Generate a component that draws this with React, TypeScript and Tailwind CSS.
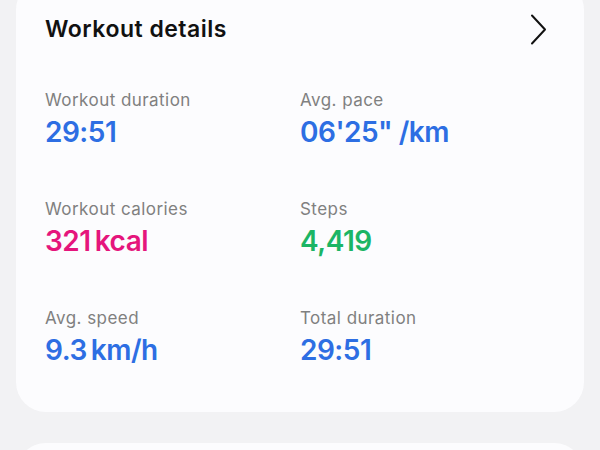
import React from "react";

const items = [
  { label: "Workout duration", value: "29:51", color: "text-[#2d6ee3]" },
  { label: "Avg. pace", value: "06'25\" /km", color: "text-[#2d6ee3]" },
  { label: "Workout calories", value: "321\u2009kcal", color: "text-[#e5157c]" },
  { label: "Steps", value: "4,419", color: "text-[#1bb565]" },
  { label: "Avg. speed", value: "9.3\u2009km/h", color: "text-[#2d6ee3]" },
  { label: "Total duration", value: "29:51", color: "text-[#2d6ee3]" },
];

export default function App() {
  return (
    <div
      className="w-[600px] h-[450px] overflow-hidden bg-[#f2f2f4]"
      style={{ fontFamily: "Inter, 'Noto Sans', sans-serif" }}
    >
      <div className="mx-[16px] mt-[-20px] rounded-[30px] bg-[#fcfcfe] px-[29px] pt-[34px] pb-[45px]">
        <div className="flex items-center justify-between h-[30px]">
          <div className="text-[23px] leading-[30px] font-semibold text-[#111111] tracking-[0.5px]">
            Workout details
          </div>
          <svg width="17" height="31" viewBox="0 0 17 31" className="mr-[8px]">
            <polyline
              points="2,1.5 15,15.5 2,29.5"
              fill="none"
              stroke="#111"
              strokeWidth="2"
              strokeLinecap="round"
              strokeLinejoin="round"
            />
          </svg>
        </div>
        <div className="grid grid-cols-2 gap-y-[48px] mt-[44px]">
          {items.map((it) => (
            <div key={it.label} className="flex flex-col">
              <div className="text-[17px] leading-[24px] text-[#808080] tracking-[0.45px]">{it.label}</div>
              <div className={`mt-[3px] text-[28px] leading-[34px] font-semibold tracking-[-0.5px] ${it.color}`}>
                {it.value}
              </div>
            </div>
          ))}
        </div>
      </div>
      <div className="mx-[16px] mt-[31px] h-[60px] rounded-[30px] bg-[#fcfcfe]" />
    </div>
  );
}
